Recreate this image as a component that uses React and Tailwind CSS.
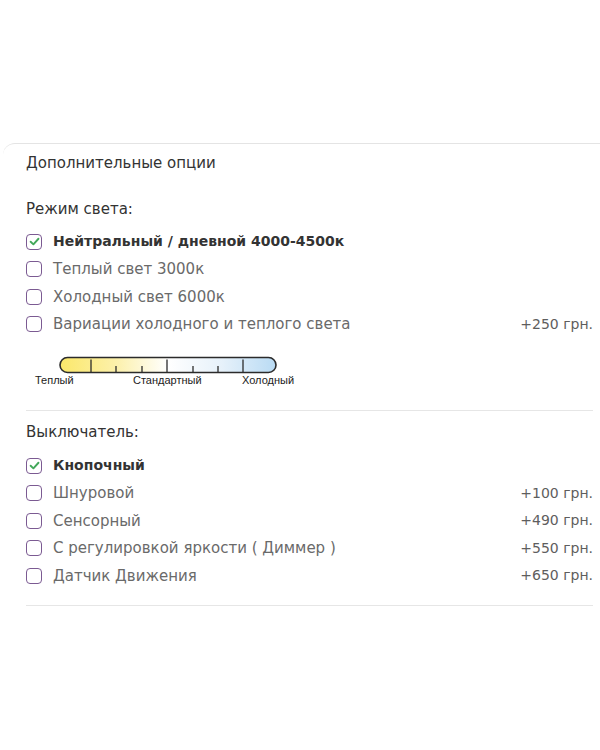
import { useState } from "react";

const lightModes = [
  { id: "neutral", label: "Нейтральный / дневной 4000-4500к" },
  { id: "warm", label: "Теплый свет 3000к" },
  { id: "cold", label: "Холодный свет 6000к" },
  { id: "mix", label: "Вариации холодного и теплого света", price: "+250 грн." },
];

const switches = [
  { id: "button", label: "Кнопочный" },
  { id: "cord", label: "Шнуровой", price: "+100 грн." },
  { id: "touch", label: "Сенсорный", price: "+490 грн." },
  { id: "dimmer", label: "С регулировкой яркости ( Диммер )", price: "+550 грн." },
  { id: "motion", label: "Датчик Движения", price: "+650 грн." },
];

function Checkbox({ checked }) {
  return (
    <span className="flex h-4 w-4 shrink-0 items-center justify-center rounded-[4px] border-[1.5px] border-[#7b5a92] bg-white">
      {checked && (
        <svg width="11" height="11" viewBox="0 0 10 10" fill="none">
          <path
            d="M1.5 5.2 L4 7.6 L8.6 2.5"
            stroke="#43a85a"
            strokeWidth="1.7"
            strokeLinecap="round"
            strokeLinejoin="round"
          />
        </svg>
      )}
    </span>
  );
}

function OptionList({ items, value, onChange }) {
  return (
    <div className="flex flex-col">
      {items.map((item) => {
        const checked = value === item.id;
        return (
          <label
            key={item.id}
            className="flex h-[27.5px] cursor-pointer items-center"
            onClick={() => onChange(item.id)}
          >
            <Checkbox checked={checked} />
            <span
              className={
                checked
                  ? "ml-[11px] text-[14px] font-bold text-[#333]"
                  : "ml-[11px] text-[15px] text-[#6a6a6a]"
              }
            >
              {item.label}
            </span>
            {item.price && (
              <span className="ml-auto text-[14px] text-[#5e5e5e]">{item.price}</span>
            )}
          </label>
        );
      })}
    </div>
  );
}

// colour temperature scale: warm -> neutral -> cold
function TemperatureScale() {
  const ticks = [
    { x: 32, long: true },
    { x: 57 },
    { x: 83 },
    { x: 108, long: true },
    { x: 134 },
    { x: 159 },
    { x: 184, long: true },
  ];
  return (
    <div className="ml-[8px] w-[275px]">
      <svg width="230" height="18" viewBox="0 0 230 18" className="ml-[25px] block">
        <defs>
          <linearGradient id="temp" x1="0" x2="1" y1="0" y2="0">
            <stop offset="0" stopColor="#fbe86a" />
            <stop offset="0.25" stopColor="#fcf0a8" />
            <stop offset="0.5" stopColor="#ffffff" />
            <stop offset="0.75" stopColor="#e6f1fa" />
            <stop offset="1" stopColor="#b9dbf4" />
          </linearGradient>
        </defs>
        <rect x="1" y="1.5" width="216" height="15" rx="7.5" fill="url(#temp)" stroke="#2b2b2b" strokeWidth="1.6" />
        {ticks.map((t) => (
          <line
            key={t.x}
            x1={t.x}
            x2={t.x}
            y1={t.long ? 3.5 : 10}
            y2="16.5"
            stroke="#2b2b2b"
            strokeWidth="1.3"
          />
        ))}
      </svg>
      <div
        className="relative h-[12px] text-[11px] leading-[12px] text-[#222]"
        style={{ fontFamily: '"Liberation Sans", Arial, sans-serif' }}
      >
        <span className="absolute left-[1px] top-0">Теплый</span>
        <span className="absolute left-[99px] top-0">Стандартный</span>
        <span className="absolute left-[208px] top-0">Холодный</span>
      </div>
    </div>
  );
}

export default function App() {
  const [mode, setMode] = useState("neutral");
  const [sw, setSw] = useState("button");

  return (
    <div
      className="min-h-[750px] w-[600px] bg-white pt-[143px]"
      style={{ fontFamily: '"DejaVu Sans", "Open Sans", sans-serif' }}
    >
      <div className="ml-[3px] rounded-tl-[12px] border-t border-[#e4e4e4] pl-[23px] pr-[7px] pt-[9px]">
        <h3 className="h-[20px] text-[15px] leading-[20px] text-[#333]">
          Дополнительные опции
        </h3>

        <div className="mt-[26px] h-[20px] text-[15px] leading-[20px] text-[#333]">
          Режим света:
        </div>
        <div className="mt-[9px]">
          <OptionList items={lightModes} value={mode} onChange={setMode} />
        </div>

        <div className="mt-[18px]">
          <TemperatureScale />
        </div>

        <div className="mt-[24px] border-t border-[#e6e6e6]" />

        <div className="mt-[11px] h-[20px] text-[15px] leading-[20px] text-[#333]">
          Выключатель:
        </div>
        <div className="mt-[10px]">
          <OptionList items={switches} value={sw} onChange={setSw} />
        </div>

        <div className="mt-[15px] border-t border-[#e6e6e6]" />
      </div>
    </div>
  );
}
